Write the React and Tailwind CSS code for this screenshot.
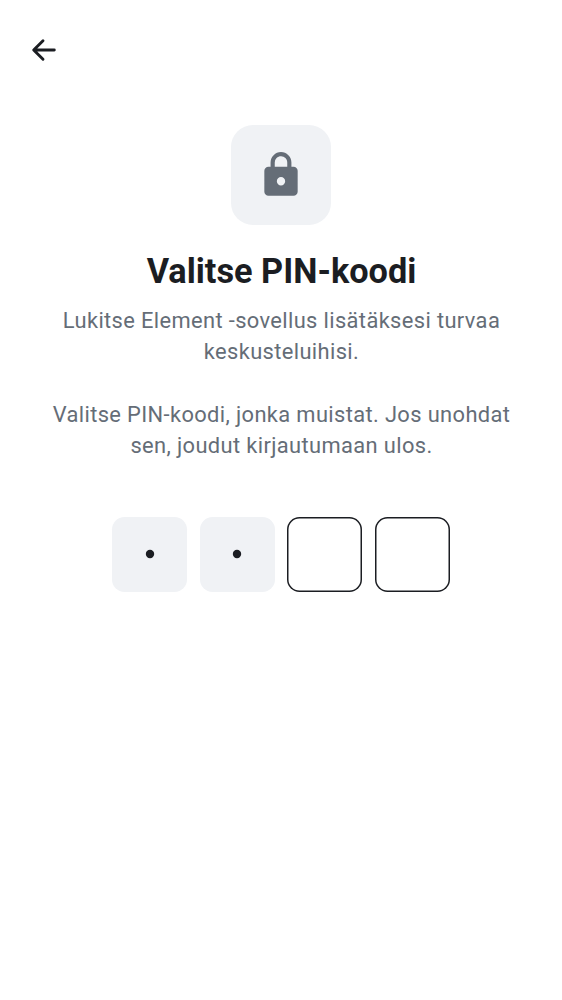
function BackIcon() {
  return (
    <svg viewBox="0 0 26 24" className="h-6 w-[26px]" fill="none" stroke="#1b1d22" strokeWidth="2.9" strokeLinecap="round" strokeLinejoin="round" aria-hidden="true">
      <path d="M23.3 12H3M12 2.7L2.7 12l9.3 9.3" />
    </svg>
  );
}

function LockIcon() {
  return (
    <svg viewBox="0 0 24 24" className="h-[50px] w-[50px]" fill="#656d77" aria-hidden="true">
      <path
        fillRule="evenodd"
        d="M6 22c-.55 0-1.02-.2-1.41-.59A1.93 1.93 0 0 1 4 20V10c0-.55.2-1.02.59-1.41C4.98 8.2 5.45 8 6 8h1V6c0-1.38.49-2.56 1.46-3.54C9.44 1.49 10.62 1 12 1s2.56.49 3.54 1.46C16.51 3.44 17 4.62 17 6v2h1c.55 0 1.02.2 1.41.59.39.39.59.86.59 1.41v10c0 .55-.2 1.02-.59 1.41-.39.39-.86.59-1.41.59H6Zm6-5c.55 0 1.02-.2 1.41-.59.39-.39.59-.86.59-1.41s-.2-1.02-.59-1.41A1.93 1.93 0 0 0 12 13c-.55 0-1.02.2-1.41.59-.39.39-.59.86-.59 1.41s.2 1.02.59 1.41c.39.39.86.59 1.41.59ZM9 8h6V6c0-.83-.29-1.54-.88-2.13A2.9 2.9 0 0 0 12 3c-.83 0-1.54.29-2.13.87A2.9 2.9 0 0 0 9 6v2Z"
      />
    </svg>
  );
}

function PinCell({ filled }) {
  return filled ? (
    <div className="flex h-[75px] w-[75px] items-center justify-center rounded-[12.5px] bg-[#f0f2f5] pb-px">
      <svg viewBox="0 0 10 10" className="h-2.5 w-2.5" aria-hidden="true">
        <circle cx="5" cy="5" r="4.2" fill="#1b1d22" />
      </svg>
    </div>
  ) : (
    <div className="h-[75px] w-[75px] rounded-[12.5px] shadow-[inset_0_0_0_1.5px_#1b1d22]" />
  );
}

export default function App() {
  return (
    <div className="flex h-[1000px] flex-col items-center bg-white font-['Roboto',sans-serif]">
      <header className="flex h-[100px] w-full items-center pl-[31px]">
        <button aria-label="Takaisin"><BackIcon /></button>
      </header>
      <main className="flex flex-col items-center pt-[25px] text-center">
        <div className="flex h-[100px] w-[100px] items-center justify-center rounded-[22px] bg-[#f0f2f5]">
          <LockIcon />
        </div>
        <h1 className="mt-[25px] pl-px text-[34.3px] leading-[42px] font-bold whitespace-nowrap text-[#1b1d22]">Valitse PIN-koodi</h1>
        <p className="mt-[13px] pl-px text-[21.875px] leading-[31.25px] tracking-[0.375px] whitespace-nowrap text-[#656d77]">
          Lukitse Element -sovellus lisätäksesi turvaa<br />keskusteluihisi.<br /><br />
          Valitse PIN-koodi, jonka muistat. Jos unohdat<br />sen, joudut kirjautumaan ulos.
        </p>
        <div className="mt-14 flex gap-[12.5px]">
          <PinCell filled />
          <PinCell filled />
          <PinCell />
          <PinCell />
        </div>
      </main>
    </div>
  );
}
